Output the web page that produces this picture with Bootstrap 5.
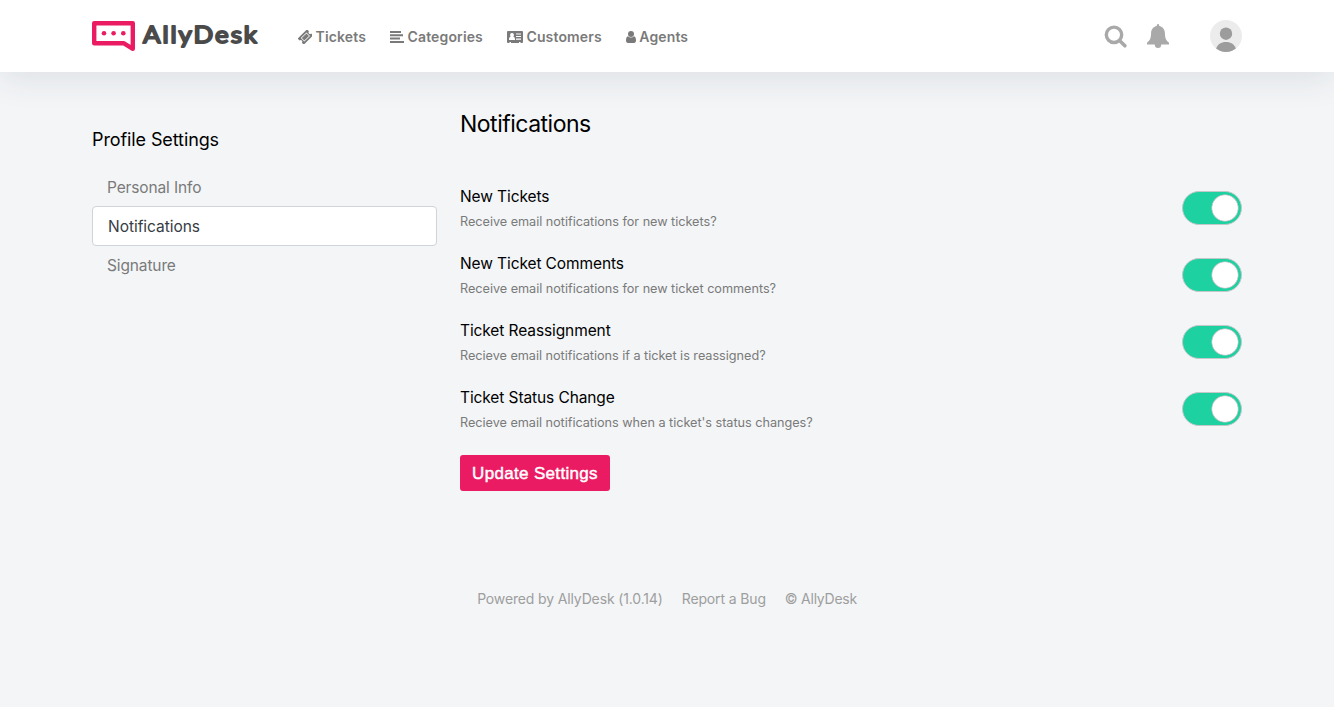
<!DOCTYPE html>
<html lang="en">
<head>
<meta charset="utf-8">
<meta name="viewport" content="width=device-width, initial-scale=1">
<title>AllyDesk – Notifications</title>
<link href="https://cdn.jsdelivr.net/npm/bootstrap@5.3.0/dist/css/bootstrap.min.css" rel="stylesheet">
<style>
body { background: #f3f5f7; color: #000; font-family: Inter, sans-serif; }
.page-width { width: 1150px; }
.topbar { height: 72px; background: #fff; box-shadow: 0 8px 32px rgba(48, 55, 70, .1); }
.topbar .nav-link { padding: 0; font-size: 14px; font-weight: 600; letter-spacing: .14px; color: #7a7a7a; line-height: 20px; }
.topbar .nav-link svg { fill: #7a7a7a; display: block; margin-right: 3.5px; }
.main-nav { margin-left: 39px; gap: 24px; padding-top: 2px; }
.icon-search { margin: 2px 18px 0 0; }
.icon-bell { margin-right: 40px; }
.side-col { width: 345px; padding-top: 56px; }
.main-col { width: 782px; }
.side-title { font-size: 18px; letter-spacing: -.1px; line-height: 24px; margin-bottom: 16px; font-weight: 400; }
.side-nav .nav-link { height: 39px; line-height: 39px; padding: 0 15px; font-size: 15.5px; letter-spacing: -.13px; color: #7a7a7a; }
.side-nav .nav-link.active { height: 40px; line-height: 39px; margin: -1px 0 0; background: #fff; border: 1px solid #ced4da; border-radius: 4px; color: #363c43; letter-spacing: -.04px; }
.main-title { font-size: 23px; letter-spacing: -.5px; line-height: 30px; font-weight: 400; margin: 37px 0 47px; }
.setting { height: 67px; }
.setting-name { font-size: 15.5px; letter-spacing: -.1px; line-height: 24px; font-weight: 400; margin: -1px 0 3px; }
.setting-info { font-size: 12.7px; letter-spacing: -.035px; line-height: 20px; color: #7a7a7a; margin: 0; }
.setting .form-check-input { width: 60px; height: 34px; margin: 5px 0 0; border: 1px solid #c3c8c9; background-color: #1dd1a1; background-image: radial-gradient(circle at 43px 17px, #fff 12.4px, #c3c8c9 13px, #c3c8c9 13.2px, transparent 13.9px) !important; background-position: 0 0; background-size: 100% 100%; background-origin: border-box; border-radius: 17px; }
.btn-update { --bs-btn-color: #fff; --bs-btn-hover-color: #fff; --bs-btn-bg: #ea1b62; --bs-btn-hover-bg: #d01556; width: 150px; height: 36px; margin-top: 1px; border: 0; border-radius: 3px; padding: 1px 0 0; font: 17px/36px "Liberation Sans", sans-serif; letter-spacing: .33px; -webkit-text-stroke: .45px #fff; }
.foot { margin-top: 98px; font-size: 14px; letter-spacing: -.14px; line-height: 20px; color: #9e9e9e; gap: 19px; }
.foot span:last-child { letter-spacing: -.25px; }
</style>
</head>
<body>
<header class="topbar">
  <div class="page-width h-100 mx-auto d-flex align-items-center">
    <a href="#" class="d-block" aria-label="AllyDesk">
      <svg class="d-block" width="167" height="40" viewBox="0 0 167 40">
        <path d="M2.2 7.2H40.800V32.800L31.600 27.200H2.200Z" fill="none" stroke="#ea1b62" stroke-width="4.4" stroke-linejoin="round"/>
        <g fill="#ea1b62"><circle cx="12" cy="17.2" r="2.3"/><circle cx="21.6" cy="17.2" r="2.3"/><circle cx="31.3" cy="17.2" r="2.3"/></g>
        <text x="51" y="26.800" font-family="Lato" font-weight="400" font-size="23.500" letter-spacing="1.8" textLength="116" lengthAdjust="spacingAndGlyphs" fill="#4a4a4a" stroke="#4a4a4a" stroke-width="1.900" stroke-linejoin="round">AllyDesk</text>
      </svg>
    </a>
    <nav class="nav main-nav">
      <a class="nav-link d-flex align-items-center" href="#"><svg width="14" height="14" viewBox="0 0 14 14"><g transform="translate(.4 0) rotate(-45 7 7)"><path fill-rule="evenodd" d="M.4 2.700H13.600V5.500A1.500 1.500 0 0 0 13.600 8.500V11.300H.4V8.500A1.500 1.500 0 0 0 .4 5.500ZM3 4.500V9.500H11V4.500ZM3.700 5.200H10.300V8.800H3.700Z"/></g></svg>Tickets</a>
      <a class="nav-link d-flex align-items-center" href="#"><svg width="14" height="12" viewBox="0 0 14 12"><path d="M0 0H11V2H0ZM0 3.300H13V5.300H0ZM0 6.600H10V8.600H0ZM0 10H14V12H0Z"/></svg>Categories</a>
      <a class="nav-link d-flex align-items-center" href="#"><svg width="16" height="12" viewBox="0 0 16 12"><path fill-rule="evenodd" d="M1 0H15A1 1 0 0 1 16 1V11A1 1 0 0 1 15 12H1A1 1 0 0 1 0 11V1A1 1 0 0 1 1 0ZM5 2A1.8 2 0 0 0 3.7 5.5C2.5 6 2 6.8 2 9H8C8 6.8 7.5 6 6.3 5.5A1.8 2 0 0 0 5 2ZM9 2.5V3.6H14V2.5ZM9 5V6.1H14V5ZM9 7.6V8.7H14V7.6ZM2.5 11V12H4V11ZM12 11V12H13.5V11Z"/></svg>Customers</a>
      <a class="nav-link d-flex align-items-center" href="#"><svg width="10" height="12" viewBox="0 0 10 12"><circle cx="5" cy="3" r="3"/><path d="M2 5.2C.6 5.6 0 7 0 9.6 0 11.2.8 12 2 12H8C9.2 12 10 11.2 10 9.6 10 7 9.4 5.6 8 5.2A4.2 4.2 0 0 1 2 5.2Z"/></svg>Agents</a>
    </nav>
    <div class="ms-auto d-flex align-items-center">
      <svg class="icon-search" width="24" height="24" viewBox="0 0 24 24" fill="none" stroke="#a9a9a9"><circle cx="10" cy="9.8" r="7.7" stroke-width="3.4"/><path d="M16 16L20.900 20.800" stroke-width="3.6" stroke-linecap="round"/></svg>
      <svg class="icon-bell" width="24" height="24" viewBox="0 0 24 24" fill="#a9a9a9"><path d="M12 0C12.9 0 13.4.8 13.2 1.9C16.8 2.6 18.8 5.4 18.9 9C19 14 20 16.5 23 18.7V20.6H1V18.7C4 16.5 5 14 5.1 9C5.2 5.4 7.2 2.6 10.8 1.9C10.6.8 11.1 0 12 0ZM8.8 20.5H15.2A3.2 3.5 0 0 1 8.8 20.5Z"/></svg>
      <svg width="32" height="32" viewBox="0 0 32 32"><defs><clipPath id="avatar"><circle cx="16" cy="16" r="16"/></clipPath></defs><circle cx="16" cy="16" r="16" fill="#ececec"/><g fill="#9c9c9c" clip-path="url(#avatar)"><circle cx="16" cy="13.7" r="6.2"/><path d="M5.5 30C7.5 24 11 22 16 22S24.500 24 26.500 30V32H5.500Z"/></g></svg>
    </div>
  </div>
</header>
<div class="page-width mx-auto d-flex justify-content-between">
  <aside class="side-col">
    <h2 class="side-title">Profile Settings</h2>
    <nav class="nav flex-column side-nav">
      <a class="nav-link" href="#">Personal Info</a>
      <a class="nav-link active" href="#">Notifications</a>
      <a class="nav-link" href="#">Signature</a>
    </nav>
  </aside>
  <main class="main-col">
    <h1 class="main-title">Notifications</h1>
    <div class="setting d-flex justify-content-between"><div><h3 class="setting-name">New Tickets</h3><p class="setting-info">Receive email notifications for new tickets?</p></div><div class="form-switch p-0"><input class="form-check-input" type="checkbox" role="switch" checked aria-label="New Tickets"></div></div>
    <div class="setting d-flex justify-content-between"><div><h3 class="setting-name">New Ticket Comments</h3><p class="setting-info">Receive email notifications for new ticket comments?</p></div><div class="form-switch p-0"><input class="form-check-input" type="checkbox" role="switch" checked aria-label="New Ticket Comments"></div></div>
    <div class="setting d-flex justify-content-between"><div><h3 class="setting-name">Ticket Reassignment</h3><p class="setting-info">Recieve email notifications if a ticket is reassigned?</p></div><div class="form-switch p-0"><input class="form-check-input" type="checkbox" role="switch" checked aria-label="Ticket Reassignment"></div></div>
    <div class="setting d-flex justify-content-between"><div><h3 class="setting-name">Ticket Status Change</h3><p class="setting-info">Recieve email notifications when a ticket's status changes?</p></div><div class="form-switch p-0"><input class="form-check-input" type="checkbox" role="switch" checked aria-label="Ticket Status Change"></div></div>
    <button class="btn btn-update d-block" type="button">Update Settings</button>
  </main>
</div>
<footer class="foot d-flex justify-content-center"><span>Powered by AllyDesk (1.0.14)</span><span>Report a Bug</span><span>© AllyDesk</span></footer>
<script src="https://cdn.jsdelivr.net/npm/bootstrap@5.3.0/dist/js/bootstrap.bundle.min.js"></script>
</body>
</html>
